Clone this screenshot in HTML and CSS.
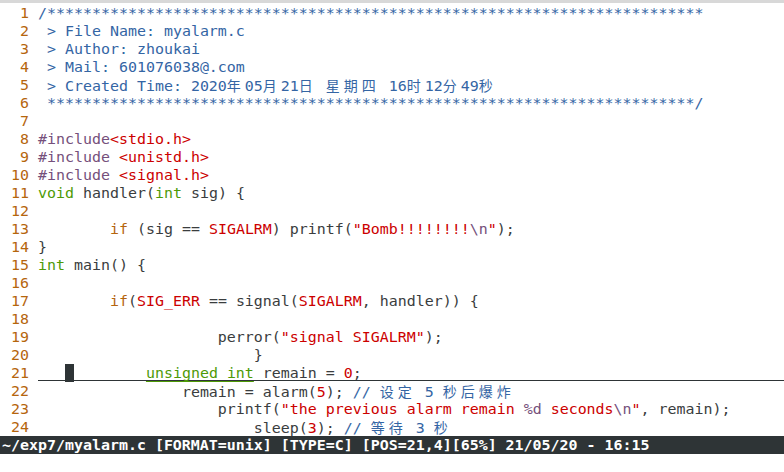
FILE: index.html
```html
<!DOCTYPE html>
<html lang="zh">
<head>
<meta charset="utf-8">
<title>myalarm.c - vim</title>
<link rel="stylesheet" href="styles.css">
</head>
<body>
<div class="topbar"></div>
<div class="editor">
  <div class="row"><span class="nr">1</span><span class="tx"><span class="cm">/*************************************************************************</span></span></div>
  <div class="row"><span class="nr">2</span><span class="tx"><span class="cm"> &gt; File Name: myalarm.c</span></span></div>
  <div class="row"><span class="nr">3</span><span class="tx"><span class="cm"> &gt; Author: zhoukai</span></span></div>
  <div class="row"><span class="nr">4</span><span class="tx"><span class="cm"> &gt; Mail: 601076038@.com</span></span></div>
  <div class="row"><span class="nr">5</span><span class="tx"><span class="cm"> &gt; Created Time: 2020<span class="cjk">年</span>05<span class="cjk">月</span>21<span class="cjk">日</span> <span class="cjk">星期四</span> 16<span class="cjk">时</span>12<span class="cjk">分</span>49<span class="cjk">秒</span></span></span></div>
  <div class="row"><span class="nr">6</span><span class="tx"><span class="cm"> ************************************************************************/</span></span></div>
  <div class="row"><span class="nr">7</span><span class="tx"></span></div>
  <div class="row"><span class="nr">8</span><span class="tx"><span class="pp">#include</span><span class="st">&lt;stdio.h&gt;</span></span></div>
  <div class="row"><span class="nr">9</span><span class="tx"><span class="pp">#include</span> <span class="st">&lt;unistd.h&gt;</span></span></div>
  <div class="row"><span class="nr">10</span><span class="tx"><span class="pp">#include</span> <span class="st">&lt;signal.h&gt;</span></span></div>
  <div class="row"><span class="nr">11</span><span class="tx"><span class="ty">void</span> handler(<span class="ty">int</span> sig) {</span></div>
  <div class="row"><span class="nr">12</span><span class="tx"></span></div>
  <div class="row"><span class="nr">13</span><span class="tx">        <span class="kw">if</span> (sig == <span class="st">SIGALRM</span>) printf(<span class="st">"Bomb!!!!!!!!</span><span class="sp">\n</span><span class="st">"</span>);</span></div>
  <div class="row"><span class="nr">14</span><span class="tx">}</span></div>
  <div class="row"><span class="nr">15</span><span class="tx"><span class="ty">int</span> main() {</span></div>
  <div class="row"><span class="nr">16</span><span class="tx"></span></div>
  <div class="row"><span class="nr">17</span><span class="tx">        <span class="kw">if</span>(<span class="st">SIG_ERR</span> == signal(<span class="st">SIGALRM</span>, handler)) {</span></div>
  <div class="row"><span class="nr">18</span><span class="tx"></span></div>
  <div class="row"><span class="nr">19</span><span class="tx">                    perror(<span class="st">"signal SIGALRM"</span>);</span></div>
  <div class="row"><span class="nr">20</span><span class="tx">                        }</span></div>
  <div class="row"><span class="nr">21</span><span class="tx cul">   <span class="cursor"> </span>        <span class="ty ul">unsigned int</span> remain = <span class="st">0</span>;</span></div>
  <div class="row"><span class="nr">22</span><span class="tx">                remain = alarm(<span class="st">5</span>); <span class="cm">// <span class="cjk">设定</span> 5 <span class="cjk">秒后爆炸</span></span></span></div>
  <div class="row"><span class="nr">23</span><span class="tx">                    printf(<span class="st">"the previous alarm remain </span><span class="sp">%d</span><span class="st"> seconds</span><span class="sp">\n</span><span class="st">"</span>, remain);</span></div>
  <div class="row"><span class="nr">24</span><span class="tx">                        sleep(<span class="st">3</span>); <span class="cm">// <span class="cjk">等待</span> 3 <span class="cjk">秒</span></span></span></div>
</div>
<div class="status">~/exp7/myalarm.c [FORMAT=unix] [TYPE=C] [POS=21,4][65%] 21/05/20 - 16:15</div>
<div class="cmdline"></div>
</body>
</html>
```

FILE: styles.css
```css
html, body {
  margin: 0;
  padding: 0;
  background: #ffffff;
}

body {
  width: 784px;
  height: 472px;
  overflow: hidden;
  font-family: "DejaVu Sans Mono", "Noto Sans CJK SC", monospace;
  font-size: 14.95px;
  color: #3a3d3e;
}

.topbar {
  height: 3px;
  background: #d8d8d8;
}

.editor {
  padding-top: 1px;
}

.row {
  display: flex;
  height: 18px;
  line-height: 18px;
  white-space: pre;
}

.nr {
  flex: 0 0 27px;
  margin-left: 2px;
  margin-right: 9px;
  text-align: right;
  color: #b5650d;
}

.tx {
  flex: 1;
}

.cul {
  background: linear-gradient(#2e3436, #2e3436) 0 16px / 100% 1px no-repeat;
}

.cursor {
  display: inline-block;
  width: 9px;
  height: 18px;
  vertical-align: top;
  background: #2e3436;
}

.cm { color: #3465a4; }
.pp { color: #75507b; }
.st { color: #cc0000; }
.sp { color: #75507b; }
.ty { color: #4e9a06; }
.kw { color: #b5650d; }

.ul {
  text-decoration: underline;
  text-decoration-color: #4e9a06;
  text-underline-offset: 3px;
}

.cjk {
  font-family: "Noto Sans CJK SC", sans-serif;
  font-size: 14px;
  letter-spacing: 4px;
  line-height: 18px;
}

.status {
  height: 18px;
  line-height: 18px;
  padding-left: 2px;
  background: #2e3436;
  color: #ffffff;
  font-weight: bold;
  white-space: pre;
}

.cmdline {
  height: 18px;
}
```
